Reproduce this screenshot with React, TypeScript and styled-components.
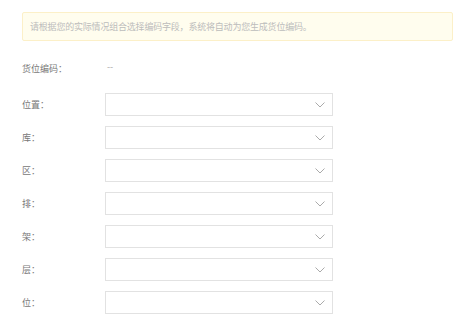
import React from 'react'
import styled, { createGlobalStyle } from 'styled-components'

const GlobalStyle = createGlobalStyle`
  html, body {
    margin: 0;
    padding: 0;
    background: #ffffff;
    font-family: "Noto Sans CJK SC", "Liberation Sans", sans-serif;
  }
`

const Page = styled.div`
  width: 458px;
  height: 330px;
  box-sizing: border-box;
  padding: 12px 5px 0 22px;
  overflow: hidden;
`

const Notice = styled.div`
  height: 29px;
  box-sizing: border-box;
  display: flex;
  align-items: center;
  padding-left: 7px;
  border: 1px solid #fcf0c8;
  background: #fffdee;
  border-radius: 2px;
  font-size: 9px;
  letter-spacing: -0.2px;
  color: #bcbcbc;
  white-space: nowrap;
`

const CodeRow = styled.div`
  display: flex;
  align-items: center;
  height: 24px;
  margin-top: 15px;
`

const Label = styled.div`
  width: 83px;
  flex-shrink: 0;
  font-size: 9px;
  color: #777777;
`

const CodeValue = styled.div`
  padding-left: 2px;
  font-size: 9px;
  color: #aaaaaa;
  margin-top: -4px;
`

const Form = styled.div`
  display: grid;
  row-gap: 10px;
  margin-top: 13px;
`

const Row = styled.div`
  display: flex;
  align-items: center;
`

const Select = styled.div`
  width: 228px;
  height: 23px;
  box-sizing: border-box;
  border: 1px solid #e2e2e2;
  background: #ffffff;
  display: flex;
  align-items: center;
  justify-content: flex-end;
  padding-right: 7px;
`

const Chevron = () => (
  <svg width="10" height="6" viewBox="0 0 10 6">
    <path d="M0.5 0.5 L5 5 L9.5 0.5" fill="none" stroke="#a0a0a0" strokeWidth="0.9" />
  </svg>
)

const fields = ['位置：', '库：', '区：', '排：', '架：', '层：', '位：']

export default function App() {
  return (
    <>
      <GlobalStyle />
      <Page>
        <Notice>请根据您的实际情况组合选择编码字段，系统将自动为您生成货位编码。</Notice>
        <CodeRow>
          <Label>货位编码：</Label>
          <CodeValue>--</CodeValue>
        </CodeRow>
        <Form>
          {fields.map((f) => (
            <Row key={f}>
              <Label>{f}</Label>
              <Select>
                <Chevron />
              </Select>
            </Row>
          ))}
        </Form>
      </Page>
    </>
  )
}
